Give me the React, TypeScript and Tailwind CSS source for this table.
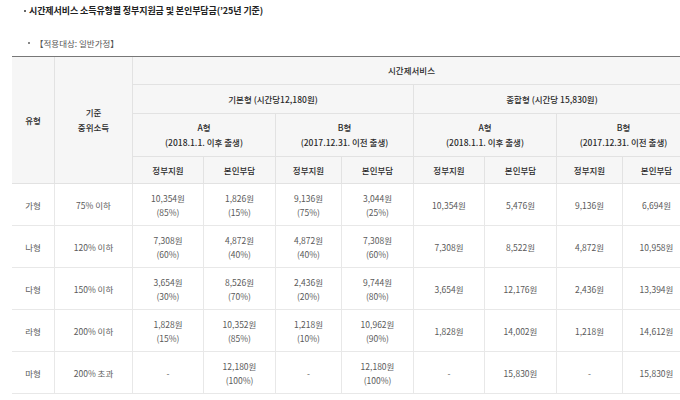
import React from "react";

const head = "flex items-center justify-center text-center bg-[#f6f6f6] border-r border-b border-[#e2e2e2] text-[#2a2a2a] font-medium leading-[15px]";
const cell = "flex items-center justify-center text-center bg-white border-r border-b border-[#e8e8e8] text-[#5a5a5a] leading-[14px]";

const rows: { t: string; inc: string; v: (string | [string, string])[] }[] = [
  { t: "가형", inc: "75% 이하", v: [["10,354원", "(85%)"], ["1,826원", "(15%)"], ["9,136원", "(75%)"], ["3,044원", "(25%)"], "10,354원", "5,476원", "9,136원", "6,694원"] },
  { t: "나형", inc: "120% 이하", v: [["7,308원", "(60%)"], ["4,872원", "(40%)"], ["4,872원", "(40%)"], ["7,308원", "(60%)"], "7,308원", "8,522원", "4,872원", "10,958원"] },
  { t: "다형", inc: "150% 이하", v: [["3,654원", "(30%)"], ["8,526원", "(70%)"], ["2,436원", "(20%)"], ["9,744원", "(80%)"], "3,654원", "12,176원", "2,436원", "13,394원"] },
  { t: "라형", inc: "200% 이하", v: [["1,828원", "(15%)"], ["10,352원", "(85%)"], ["1,218원", "(10%)"], ["10,962원", "(90%)"], "1,828원", "14,002원", "1,218원", "14,612원"] },
  { t: "마형", inc: "200% 초과", v: ["-", ["12,180원", "(100%)"], "-", ["12,180원", "(100%)"], "-", "15,830원", "-", "15,830원"] },
];

export default function App() {
  return (
    <div
      className="w-[680px] h-[400px] overflow-hidden bg-white text-[8.5px]"
      style={{ fontFamily: '"Noto Sans CJK KR", "Noto Sans", sans-serif' }}
    >
      <div className="h-[22px] flex items-center pl-[24px]">
        <span className="w-[2px] h-[2px] bg-[#666] mr-[3px]" />
        <span className="font-bold text-[#222] text-[9px] tracking-[-0.1px]">
          시간제서비스 소득유형별 정부지원금 및 본인부담금(’25년 기준)
        </span>
      </div>
      <div className="mt-[13px] h-[16px] flex items-center pl-[28px] text-[#555]">
        <span className="w-[2px] h-[2px] bg-[#888] mr-[5px]" />
        <span>【적용대상: 일반가정】</span>
      </div>
      <div className="mt-[5px] ml-[12px] w-[680px] border-t border-[#777] grid grid-cols-[43px_78px_71px_72px_66px_72px_71px_72px_66px_68px] grid-rows-[28px_29px_43px_27px_42px_42px_42px_42px_42px]">
        <div className={`${head} row-span-4`}>유형</div>
        <div className={`${head} row-span-4`}>
          기준
          <br />
          중위소득
        </div>
        <div className={`${head} col-span-8`}>시간제서비스</div>
        <div className={`${head} col-span-4`}>기본형 (시간당12,180원)</div>
        <div className={`${head} col-span-4`}>종합형 (시간당 15,830원)</div>
        <div className={`${head} col-span-2`}>
          A형
          <br />
          (2018.1.1. 이후 출생)
        </div>
        <div className={`${head} col-span-2`}>
          B형
          <br />
          (2017.12.31. 이전 출생)
        </div>
        <div className={`${head} col-span-2`}>
          A형
          <br />
          (2018.1.1. 이후 출생)
        </div>
        <div className={`${head} col-span-2`}>
          B형
          <br />
          (2017.12.31. 이전 출생)
        </div>
        {["정부지원", "본인부담", "정부지원", "본인부담", "정부지원", "본인부담", "정부지원", "본인부담"].map((s, i) => (
          <div key={i} className={head}>
            {s}
          </div>
        ))}
        {rows.map((r) => (
          <React.Fragment key={r.t}>
            <div className={cell}>{r.t}</div>
            <div className={cell}>{r.inc}</div>
            {r.v.map((v, i) => (
              <div key={i} className={cell}>
                {Array.isArray(v) ? (
                  <span>
                    {v[0]}
                    <br />
                    {v[1]}
                  </span>
                ) : (
                  v
                )}
              </div>
            ))}
          </React.Fragment>
        ))}
      </div>
    </div>
  );
}
